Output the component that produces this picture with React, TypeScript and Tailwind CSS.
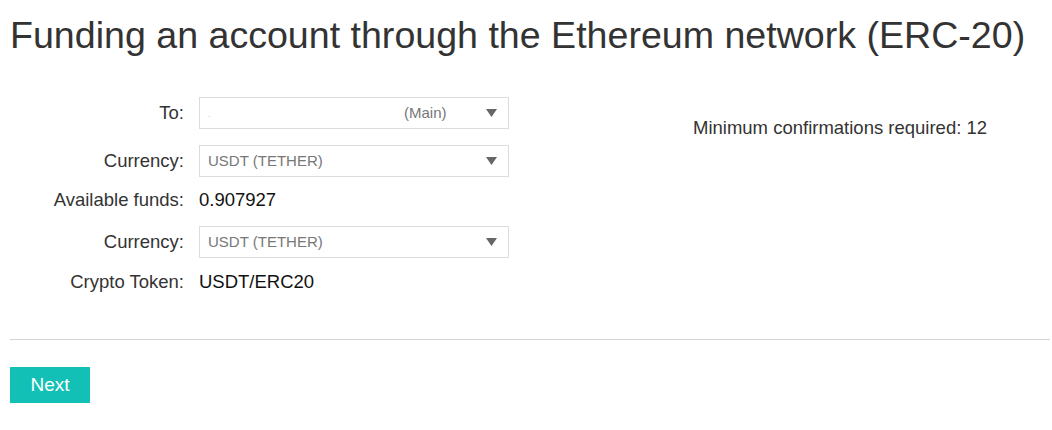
import type { ReactNode } from 'react';

function Arrow() {
    return (
        <svg width='11' height='8' viewBox='0 0 11 8' className='shrink-0'>
            <path d='M0 0 H11 L5.5 8 Z' fill='#666666' />
        </svg>
    );
}

function SelectBox({ children }: { children: ReactNode }) {
    return (
        <div className='flex items-center w-[310px] h-[32px] border border-[#dcdcdc] bg-white pl-[8px] pr-[11px] text-[15px] text-[#777777]'>
            <div className='flex-1 flex items-center'>{children}</div>
            <Arrow />
        </div>
    );
}

function Row({ label, children, className }: { label: string; children: ReactNode; className?: string }) {
    return (
        <div className={`flex items-center ${className ?? ''}`}>
            <div className='w-[185px] pr-[1px] text-right text-[18.5px] text-[#333333] whitespace-nowrap'>{label}</div>
            <div className='pl-[14px]'>{children}</div>
        </div>
    );
}

export default function App() {
    return (
        <div className='w-[1052px] h-[430px] bg-white font-[Liberation_Sans,Arial,sans-serif] overflow-hidden'>
            <h1 className='pl-[10px] pt-[12px] text-[37.6px] leading-[46px] text-[#333333] whitespace-nowrap'>
                Funding an account through the Ethereum network (ERC-20)
            </h1>
            <div className='flex mt-[39px]'>
                <div className='flex flex-col gap-[16px]'>
                    <Row label='To:' className='h-[32px]'>
                        <SelectBox>
                            <span className='w-[196px] text-[#f5c79a] text-[10px]'>.</span>
                            <span>(Main)</span>
                        </SelectBox>
                    </Row>
                    <Row label='Currency:' className='h-[32px]'>
                        <SelectBox>USDT (TETHER)</SelectBox>
                    </Row>
                    <Row label='Available funds:' className='h-[18px] -mt-[2px]'>
                        <span className='text-[18.5px] text-[#111111]'>0.907927</span>
                    </Row>
                    <Row label='Currency:' className='h-[32px] mt-[1px]'>
                        <SelectBox>USDT (TETHER)</SelectBox>
                    </Row>
                    <Row label='Crypto Token:' className='h-[18px] -mt-[1px]'>
                        <span className='text-[18.5px] text-[#111111]'>USDT/ERC20</span>
                    </Row>
                </div>
                <div className='ml-[184px] mt-[17px] text-[18.5px] text-[#333333] whitespace-nowrap'>
                    Minimum confirmations required: 12
                </div>
            </div>
            <div className='ml-[10px] mr-[2px] mt-[48px] border-t border-[#d4d4d4]' />
            <button className='ml-[10px] mt-[27px] w-[80px] h-[36px] bg-[#13c0b5] text-white text-[19px]'>
                Next
            </button>
        </div>
    );
}
